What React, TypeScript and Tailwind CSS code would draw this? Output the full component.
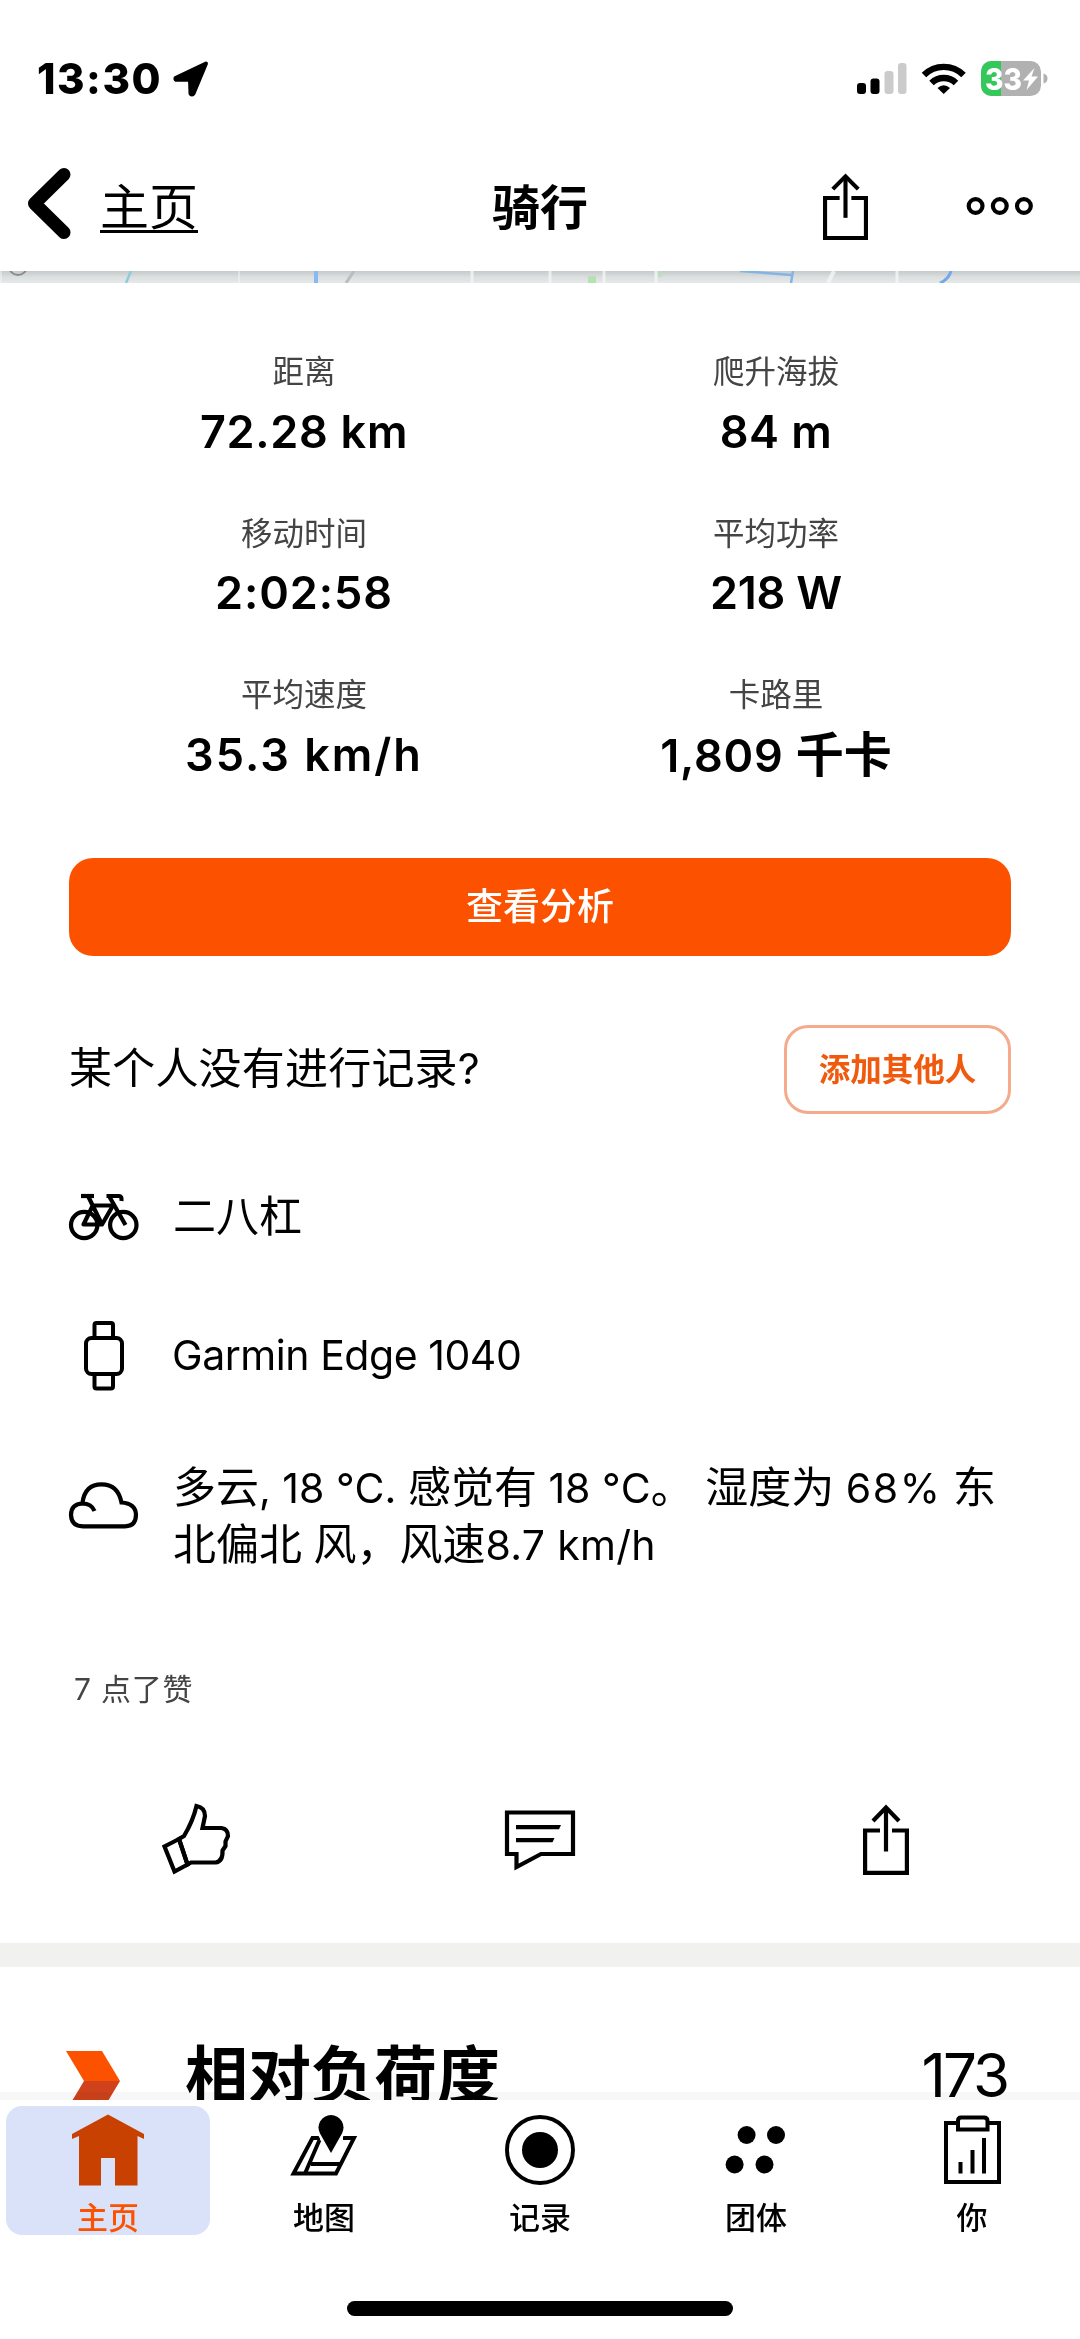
import React from "react";

type Box = { x: number; y: number; w: number; h: number };

function Glyph({ box, children, className = "" }: { box: Box; children: React.ReactNode; className?: string }) {
  return (
    <svg
      width={box.w}
      height={box.h}
      viewBox={`${box.x} ${box.y} ${box.w} ${box.h}`}
      className={`block shrink-0 ${className}`}
      fill="none"
      stroke="#000"
    >
      {children}
    </svg>
  );
}

function ShareIcon({ w = 46, h = 71 }: { w?: number; h?: number }) {
  return (
    <svg width={w} height={h} viewBox="0 0 46 71" className="block shrink-0" fill="none" stroke="#000" strokeWidth="4.200" preserveAspectRatio="none">
      <path d="M17 26.500H2.100V68.900H43.900V26.500H29" />
      <path d="M23 3V47.500" />
      <path d="M10 17L23 3.500L36 17" />
    </svg>
  );
}

const stats = [
  { label: "距离", value: "72.28 km", track: "tracking-[0.7px]" },
  { label: "爬升海拔", value: "84 m", track: "tracking-[0.5px]" },
  { label: "移动时间", value: "2:02:58", track: "tracking-[0.9px]" },
  { label: "平均功率", value: "218 W", track: "tracking-[-0.2px]" },
  { label: "平均速度", value: "35.3 km/h", track: "tracking-[2px]" },
  { label: "卡路里", value: "1,809 ", unit: "千卡", track: "tracking-[0.8px]" },
];

function StatusBar() {
  return (
    <div className="flex h-[110px] items-start pl-[37px] pr-[32px] pt-[51px]">
      <span className="w-[123px] text-[42px] font-extrabold leading-[56px] tracking-[1.5px]">13:30</span>
      <Glyph box={{ x: 172, y: 60, w: 38, h: 40 }} className="ml-3 mt-[9px]">
        <path d="M206 63.500L175.500 78Q175 79.800 177 79.800H190L190.500 93.500Q191.500 95.500 193.500 93.500Z" fill="#000" strokeWidth="4" strokeLinejoin="round" />
      </Glyph>
      <Glyph box={{ x: 856, y: 60, w: 192, h: 38 }} className="ml-auto mt-[9px]">
        <g stroke="none">
          <rect x="857" y="83" width="9" height="11" rx="3" fill="#000" />
          <rect x="870.500" y="78.500" width="9" height="15.500" rx="3" fill="#000" />
          <rect x="884.500" y="71" width="9" height="23" rx="3" fill="#cbcbcb" />
          <rect x="898" y="63" width="8.500" height="31" rx="3" fill="#cbcbcb" />
          <rect x="981" y="61" width="60" height="35" rx="10.500" fill="#b1b1b1" />
          <path d="M991.500 61H1001V96H991.500A10.500 10.500 0 0 1 981 85.500V71.500A10.500 10.500 0 0 1 991.500 61Z" fill="#34c759" />
          <path d="M1043.500 73.500Q1047.500 74.500 1047.500 78.500T1043.500 83.500Z" fill="#b1b1b1" />
          <path d="M1034.500 68L1023 80.500H1029L1026.500 90L1038 76.500H1031.500Z" fill="#fff" />
          <text x="985" y="90" fontSize="30" fontWeight="800" fontFamily="Inter" fill="#fff" textLength="37" lengthAdjust="spacingAndGlyphs">33</text>
        </g>
        <g strokeWidth="6.400">
          <path d="M924 75A28 28 0 0 1 963.500 75" />
          <path d="M931.500 83A17.500 17.500 0 0 1 956 83" />
        </g>
        <path d="M937.500 88Q943.700 82.500 950 88L943.700 94Z" fill="#000" stroke="none" />
      </Glyph>
    </div>
  );
}

function MapStrip() {
  return (
    <div className="h-[12px] bg-gradient-to-b from-[#c6c9c9] via-[#dcdfdf] to-[#e6e9e9]">
      <svg width="1080" height="12" viewBox="0 271 1080 12" className="block" fill="none">
        <circle cx="18" cy="266" r="9" stroke="#8b8b8b" strokeWidth="2" />
        <path d="M131 271L126 283" stroke="#8ecbdc" strokeWidth="2.500" />
        <path d="M316 271V283" stroke="#8ab8f2" strokeWidth="4" />
        <path d="M354 271L346 283" stroke="#b9bdbd" strokeWidth="3" />
        <path d="M1 271V283M239 271V283" stroke="#f6f7f7" strokeWidth="2" opacity=".5" />
        <path d="M472 271V283M550 271V283M604 271V283M656 271V283M897 271V283" stroke="#f6f7f7" strokeWidth="3" opacity=".75" />
        <path d="M834 271L828 283" stroke="#f6f7f7" strokeWidth="4" opacity=".75" />
        <rect x="588" y="276" width="8" height="7" fill="#b5e2b5" />
        <path d="M660 271V277" stroke="#b5e2b5" strokeWidth="3" />
        <path d="M740 271L792 275M793 271L791 283" stroke="#83b4e6" strokeWidth="2.500" />
        <path d="M951 271Q949 279 940 283" stroke="#6fa9ea" strokeWidth="3" />
      </svg>
    </div>
  );
}

function Header() {
  return (
    <div className="grid h-[161px] grid-cols-3 items-start">
      <div className="flex pl-[26px]">
        <Glyph box={{ x: 26, y: 166, w: 46, h: 76 }} className="mt-[56px]">
          <path d="M64 174.500L34.500 203.500L64 232.500" strokeWidth="13" strokeLinecap="round" strokeLinejoin="round" />
        </Glyph>
        <span className="ml-[28px] mt-[66px] inline-block h-[57px] border-b-[3px] border-black text-[49px] leading-[64px]">主页</span>
      </div>
      <h1 className="mt-[66px] text-center text-[48px] font-bold leading-[64px]">骑行</h1>
      <div className="flex justify-end pr-[46px] pt-[61px]">
        <div className="mr-[98px] mt-[2px]"><ShareIcon w={45} h={67} /></div>
        <Glyph box={{ x: 966, y: 196, w: 68, h: 20 }} className="mt-[25px]">
          <g strokeWidth="4.200">
            <circle cx="975.600" cy="206" r="6.900" />
            <circle cx="999.800" cy="206" r="6.900" />
            <circle cx="1023.900" cy="206" r="6.900" />
          </g>
        </Glyph>
      </div>
    </div>
  );
}

function BikeIcon() {
  return (
    <Glyph box={{ x: 68, y: 1192, w: 72, h: 50 }}>
      <g strokeWidth="4.200">
        <circle cx="84.200" cy="1225" r="13.200" />
        <circle cx="123.300" cy="1225" r="13.200" />
        <path d="M81 1196H94" />
        <path d="M88 1196L102 1224.500H83.500L93 1205M93 1205.500H113L102 1224.500" strokeLinejoin="round" />
        <path d="M125.500 1225L109 1196M106.500 1196H119Q122 1196 121.500 1201" />
      </g>
    </Glyph>
  );
}

function WatchIcon() {
  return (
    <Glyph box={{ x: 68, y: 1320, w: 72, h: 72 }}>
      <g strokeWidth="4">
        <rect x="86" y="1338" width="36" height="36" rx="5.500" />
        <path d="M94.500 1338V1325Q94.500 1323 96.500 1323H111Q113 1323 113 1325V1338" />
        <path d="M94.500 1374V1386.500Q94.500 1388.500 96.500 1388.500H111Q113 1388.500 113 1386.500V1374" />
      </g>
    </Glyph>
  );
}

function CloudIcon() {
  return (
    <Glyph box={{ x: 68, y: 1480, w: 72, h: 50 }}>
      <path d="M94.500 1511Q91.500 1503.500 82.500 1503.500Q71 1504 71 1515Q71.500 1526.300 83 1526.300H125Q136 1526.300 136 1514.500Q135.500 1503.500 121.500 1502.500Q118 1484.300 101.500 1484.300Q85 1484.300 82.500 1502.500" strokeWidth="4.200" />
    </Glyph>
  );
}

function Actions() {
  return (
    <div className="mt-[93px] flex h-[74px] items-start pl-[160px]">
      <Glyph box={{ x: 160, y: 1802, w: 72, h: 76 }}>
        <g strokeWidth="4.200" strokeLinejoin="miter">
          <path d="M179 1839L164.500 1846.500L174.500 1871.500L187.500 1864.500Z" />
          <path d="M179 1839L184 1836Q193 1821 196.500 1806Q205 1807.500 205 1816L202.500 1828H221.500Q228 1829 228 1836L225.500 1841.500L225.500 1846L222.500 1850.500Q223 1861.500 215.500 1862.500H191L187.500 1864.500Z" />
        </g>
      </Glyph>
      <Glyph box={{ x: 504, y: 1809, w: 72, h: 64 }} className="ml-[272px] mt-[7px]">
        <g strokeWidth="4.200">
          <path d="M507 1812.500H573V1854H541L516.500 1867V1854H507Z" />
        </g>
        <path d="M516 1825H561L559 1829.200H516ZM516 1838H554.500L552.500 1842.200H516Z" fill="#000" stroke="none" />
      </Glyph>
      <div className="ml-[287px] mt-[2px]"><ShareIcon /></div>
    </div>
  );
}

function TabBar() {
  const tab = "flex w-[216px] flex-col items-center text-[31px] font-medium leading-[40px]";
  return (
    <nav className="relative h-[239px] bg-white">
      <div className="absolute -top-2 left-0 h-2 w-full bg-[#f6f7f6] mix-blend-multiply" />
      <div className="flex">
        <div className="w-[216px] pl-[6px] pt-[6px]">
          <div className="flex h-[129px] w-[204px] flex-col items-center rounded-[16px] bg-[#d9e2f9] text-[31px] font-medium leading-[40px] text-[#fc5200]">
            <Glyph box={{ x: 71, y: 2114, w: 72, h: 72 }} className="mt-[8px]">
              <path d="M107 2114.500L143 2134V2139L136.500 2136V2185.500H114V2158H100V2185.500H78V2136L71 2139V2134Z" fill="#c84101" stroke="none" />
            </Glyph>
            <span className="mt-[12px]">主页</span>
          </div>
        </div>
        <div className={tab}>
          <Glyph box={{ x: 288, y: 2114, w: 72, h: 72 }} className="mt-[14px]">
            <path d="M320 2138H312.500L293.500 2173.500H336L354 2138H343" strokeWidth="3.900" />
            <path d="M319.500 2140L305 2173.500M311 2164H342" strokeWidth="3.900" />
            <path d="M331 2153L320 2133.500A12.500 12.500 0 1 1 342 2133.500Z" fill="#000" stroke="#fff" strokeWidth="5" paintOrder="stroke" />
          </Glyph>
          <span className="mt-[12px]">地图</span>
        </div>
        <div className={tab}>
          <Glyph box={{ x: 504, y: 2114, w: 72, h: 72 }} className="mt-[14px]">
            <circle cx="540" cy="2150" r="33" strokeWidth="3.900" />
            <circle cx="540" cy="2150" r="18" fill="#000" stroke="none" />
          </Glyph>
          <span className="mt-[12px]">记录</span>
        </div>
        <div className={tab}>
          <Glyph box={{ x: 720, y: 2114, w: 72, h: 72 }} className="mt-[14px]">
            <g fill="#000" stroke="none">
              <circle cx="746.600" cy="2135" r="9" />
              <circle cx="776" cy="2135" r="9" />
              <circle cx="734.600" cy="2164.500" r="9" />
              <circle cx="764.500" cy="2164.500" r="9" />
            </g>
          </Glyph>
          <span className="mt-[12px]">团体</span>
        </div>
        <div className={tab}>
          <Glyph box={{ x: 936, y: 2114, w: 72, h: 72 }} className="mt-[14px]">
            <g strokeWidth="4">
              <path d="M958 2123H946V2182H999V2123H988" />
              <path d="M958 2129.500V2121Q958 2117.500 961 2117.500H984Q987.500 2117.500 987.500 2121V2129.500Z" />
              <path d="M960.500 2173.500V2162M972.500 2173.500V2150M984 2173.500V2138" />
            </g>
          </Glyph>
          <span className="mt-[12px]">你</span>
        </div>
      </div>
      <div className="mx-auto mt-[63px] h-[15px] w-[386px] rounded-full bg-black" />
    </nav>
  );
}

function Weather() {
  const cjk = "text-[43px]";
  return (
    <div className="-mt-px whitespace-pre text-[41px] leading-[57px]">
      <div className="h-[57px]">
        <span className={cjk}>多云</span>, 18 °C. <span className={cjk}>感觉有</span> 18 °C<span className={cjk}>。</span> <span className={cjk}>湿度为</span>{" "}
        <span className="tracking-[1.6px]">68%</span> <span className={cjk}>东</span>
      </div>
      <div className="h-[57px]">
        <span className={cjk}>北偏北</span> <span className={cjk}>风，风速</span><span className="tracking-[0.3px]">8.7 km/h</span>
      </div>
    </div>
  );
}

export default function App() {
  return (
    <div className="flex h-[2339px] w-[1080px] flex-col overflow-hidden bg-white font-[Inter,'Noto_Sans_CJK_SC',sans-serif] text-black">
      <StatusBar />
      <Header />
      <main className="h-[1829px] overflow-hidden">
        <MapStrip />
        <section className="px-[69px] pt-[69px]">
          <div className="-mx-px grid grid-cols-2 gap-y-[54px]">
            {stats.map(({ label, value, unit, track }) => (
              <div key={label} className="flex flex-col items-center gap-[11.500px]">
                <span className="text-[31.500px] leading-[40px] text-[#444]">{label}</span>
                <span className={`h-[56px] whitespace-pre text-[45px] font-semibold leading-[56px] ${track}`}>
                  {value}
                  {unit && <span className="text-[48px] tracking-normal">{unit}</span>}
                </span>
              </div>
            ))}
          </div>
          <button className="mt-[75.500px] flex h-[98px] w-[942px] items-center justify-center rounded-[24px] bg-[#fc5200] text-[37px] font-medium leading-[50px] text-white">
            查看分析
          </button>
          <div className="mt-[69px] flex h-[89px] items-center justify-between">
            <span className="-mt-[3px] text-[43px] leading-[56px] tracking-[0.2px]">某个人没有进行记录?</span>
            <button className="h-[89px] w-[227px] rounded-[24px] border-[3px] border-[#f4ab8b] text-[31.500px] font-bold leading-[40px] text-[#f05a0e]">添加其他人</button>
          </div>
        </section>
        <section className="pl-[68px] pt-[78px]">
          <div className="flex h-[50px] items-start gap-[33px]">
            <BikeIcon />
            <span className="-mt-[4px] text-[43px] leading-[57px]">二八杠</span>
          </div>
          <div className="mt-[78px] flex items-start gap-[32px]">
            <WatchIcon />
            <span className="mt-[7px] text-[41px] leading-[57px] tracking-[-0.45px]">Garmin Edge 1040</span>
          </div>
          <div className="mt-[68px] flex items-start gap-[33px]">
            <div className="mt-[20px]"><CloudIcon /></div>
            <Weather />
          </div>
        </section>
        <div className="ml-[74px] mt-[96px] text-[30px] leading-[40px] tracking-[0.8px] text-[#444]">7 点了赞</div>
        <Actions />
        <div className="mt-[67px] h-[24px] bg-[#f1f1ef]" />
        <section className="flex items-start pl-[66px] pr-[73px]">
          <Glyph box={{ x: 66, y: 2051, w: 54, h: 80 }} className="mt-[84px]">
            <g stroke="none">
              <path d="M66 2051H102L120 2081H84Z" fill="#fc5200" />
              <path d="M84 2081H120L102 2111H66Z" fill="#d0421b" />
            </g>
          </Glyph>
          <h2 className="ml-[65px] mt-[66px] text-[63px] font-bold leading-[84px]">相对负荷度</h2>
          <span className="ml-auto mt-[66px] text-[60px] leading-[84px] tracking-[-3px]">173</span>
        </section>
      </main>
      <TabBar />
    </div>
  );
}
